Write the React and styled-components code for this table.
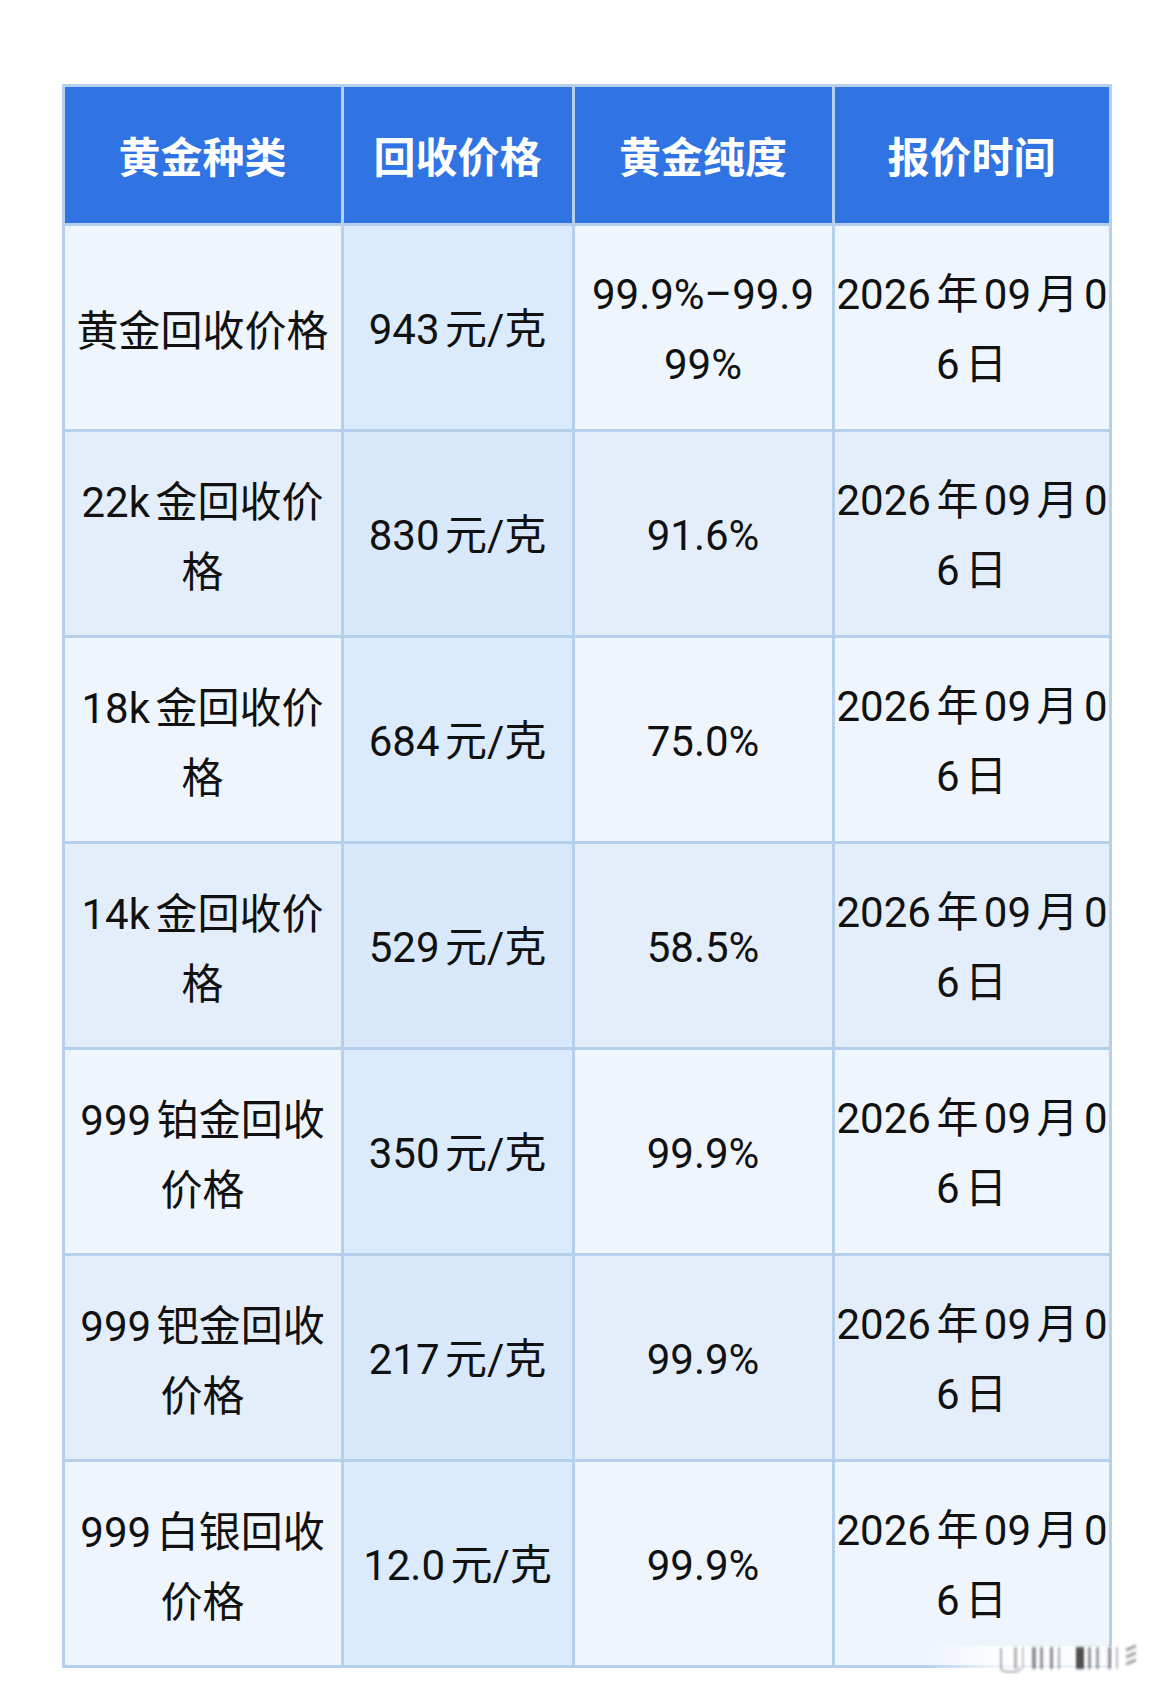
import React from "react";
import styled, { createGlobalStyle } from "styled-components";

const Global = createGlobalStyle`
  html, body { margin: 0; padding: 0; background: #ffffff; }
  body { font-family: "Noto Sans CJK SC", "Noto Sans", sans-serif; color: #111; }
`;

const Page = styled.div`
  width: 1170px;
  min-height: 1698px;
  padding-top: 84px;
  box-sizing: border-box;
`;

const Wrapper = styled.div`
  position: relative;
  width: 1047px;
  margin: 0 auto;
`;

const Table = styled.table`
  width: 1047px;
  table-layout: fixed;
  border-collapse: collapse;
  border: 3px solid #b6cfea;
`;

const HeadRow = styled.tr`
  height: 139px;
`;

const BodyRow = styled.tr`
  height: 206px;
`;

const Th = styled.th`
  background: #2f74e2;
  color: #ffffff;
  font-family: "Noto Sans CJK SC", sans-serif;
  font-weight: 700;
  font-size: 42px;
  line-height: 1;
  text-align: center;
  vertical-align: middle;
  border: 3px solid #b6cfea;
  padding: 0;
`;

const Td = styled.td`
  background: ${(p) => (p.$accent ? (p.$odd ? "#dcebfc" : "#d9e9fb") : p.$odd ? "#eef5fd" : "#e4eefa")};
  color: #111;
  font-family: "Noto Sans CJK SC", sans-serif;
  font-weight: 400;
  font-size: 42px;
  line-height: 66px;
  text-align: center;
  vertical-align: middle;
  border: 3px solid #b6cfea;
  padding: 0;
  white-space: nowrap;
  overflow: visible;
`;

const Line = styled.span`
  display: block;
  text-align: ${(p) => (p.$start ? "left" : "center")};
  padding-left: ${(p) => (p.$start ? "2px" : "0")};
`;

const Latin = styled.span`
  font-family: Roboto, "Noto Sans", sans-serif;
  margin-left: ${(p) => (p.$gapL ? "0.13em" : "0")};
  margin-right: ${(p) => (p.$gapR ? "0.13em" : "0")};
`;

const Watermark = styled.div`
  position: absolute;
  left: 862px;
  top: 1556px;
  width: 220px;
  height: 34px;
  pointer-events: none;
`;

const isCJK = (ch) => /[\u3000-\u9fff\uff00-\uffef]/.test(ch);

function Mixed({ text }) {
  const runs = [];
  let cur = "";
  let curCJK = null;
  for (const ch of text) {
    const c = isCJK(ch);
    if (curCJK === null || c === curCJK) {
      cur += ch;
    } else {
      runs.push({ t: cur, cjk: curCJK });
      cur = ch;
    }
    curCJK = c;
  }
  if (cur) runs.push({ t: cur, cjk: curCJK });
  return runs.map((r, i) => {
    if (r.cjk) return <React.Fragment key={i}>{r.t}</React.Fragment>;
    const prev = runs[i - 1];
    const next = runs[i + 1];
    const gapL = prev && prev.cjk && /[0-9A-Za-z]/.test(r.t[0]);
    const gapR = next && next.cjk && /[0-9A-Za-z]/.test(r.t[r.t.length - 1]);
    return (
      <Latin key={i} $gapL={gapL} $gapR={gapR}>
        {r.t}
      </Latin>
    );
  });
}

const headers = ["黄金种类", "回收价格", "黄金纯度", "报价时间"];
const widths = [279, 231, 260, 277];
const date = ["2026年09月0", "6日"];

const rows = [
  [["黄金回收价格"], ["943元/克"], ["99.9%–99.9", "99%"], date],
  [["22k金回收价", "格"], ["830元/克"], ["91.6%"], date],
  [["18k金回收价", "格"], ["684元/克"], ["75.0%"], date],
  [["14k金回收价", "格"], ["529元/克"], ["58.5%"], date],
  [["999铂金回收", "价格"], ["350元/克"], ["99.9%"], date],
  [["999钯金回收", "价格"], ["217元/克"], ["99.9%"], date],
  [["999白银回收", "价格"], ["12.0元/克"], ["99.9%"], date],
];

function Smudge() {
  const bars = [
    [150, 3, 0.35], [158, 2, 0.25], [168, 4, 0.55], [176, 3, 0.5], [186, 3, 0.55],
    [194, 2, 0.4], [212, 8, 0.85], [224, 3, 0.5], [232, 3, 0.45], [244, 3, 0.5],
    [252, 2, 0.35],
  ];
  return (
    <svg width="220" height="34" viewBox="0 0 220 34">
      <defs>
        <linearGradient id="fade" x1="0" x2="1" y1="0" y2="0">
          <stop offset="0" stopColor="#ffffff" stopOpacity="0" />
          <stop offset="0.35" stopColor="#ffffff" stopOpacity="0.85" />
          <stop offset="1" stopColor="#ffffff" stopOpacity="0.6" />
        </linearGradient>
        <filter id="blur" x="-20%" y="-20%" width="140%" height="140%">
          <feGaussianBlur stdDeviation="0.9 1.6" />
        </filter>
      </defs>
      <rect x="0" y="6" width="220" height="24" fill="url(#fade)" />
      <g filter="url(#blur)" transform="translate(-60 0)">
        <path d="M137 8 L137 28 Q137 32 147 32 Q156 32 156 28" fill="none" stroke="#777" strokeWidth="2" opacity="0.6" />
        {bars.map(([x, w, o], i) => (
          <rect key={i} x={x} y="7" width={w} height="22" fill="#333" opacity={o} />
        ))}
        <path d="M262 10 L272 6 M262 17 L272 13 M262 24 L272 20" stroke="#444" strokeWidth="2" opacity="0.7" />
      </g>
    </svg>
  );
}

export default function App() {
  return (
    <Page>
      <Global />
      <Wrapper>
        <Table>
          <colgroup>
            {widths.map((w, i) => (
              <col key={i} style={{ width: w }} />
            ))}
          </colgroup>
          <thead>
            <HeadRow>
              {headers.map((h) => (
                <Th key={h}>{h}</Th>
              ))}
            </HeadRow>
          </thead>
          <tbody>
            {rows.map((r, ri) => (
              <BodyRow key={ri}>
                {r.map((cell, ci) => (
                  <Td key={ci} $odd={ri % 2 === 0} $accent={ci === 1}>
                    {cell.map((line, li) => (
                      <Line key={li} $start={ci === 3 && li === 0}>
                        <Mixed text={line} />
                      </Line>
                    ))}
                  </Td>
                ))}
              </BodyRow>
            ))}
          </tbody>
        </Table>
        <Watermark>
          <Smudge />
        </Watermark>
      </Wrapper>
    </Page>
  );
}
